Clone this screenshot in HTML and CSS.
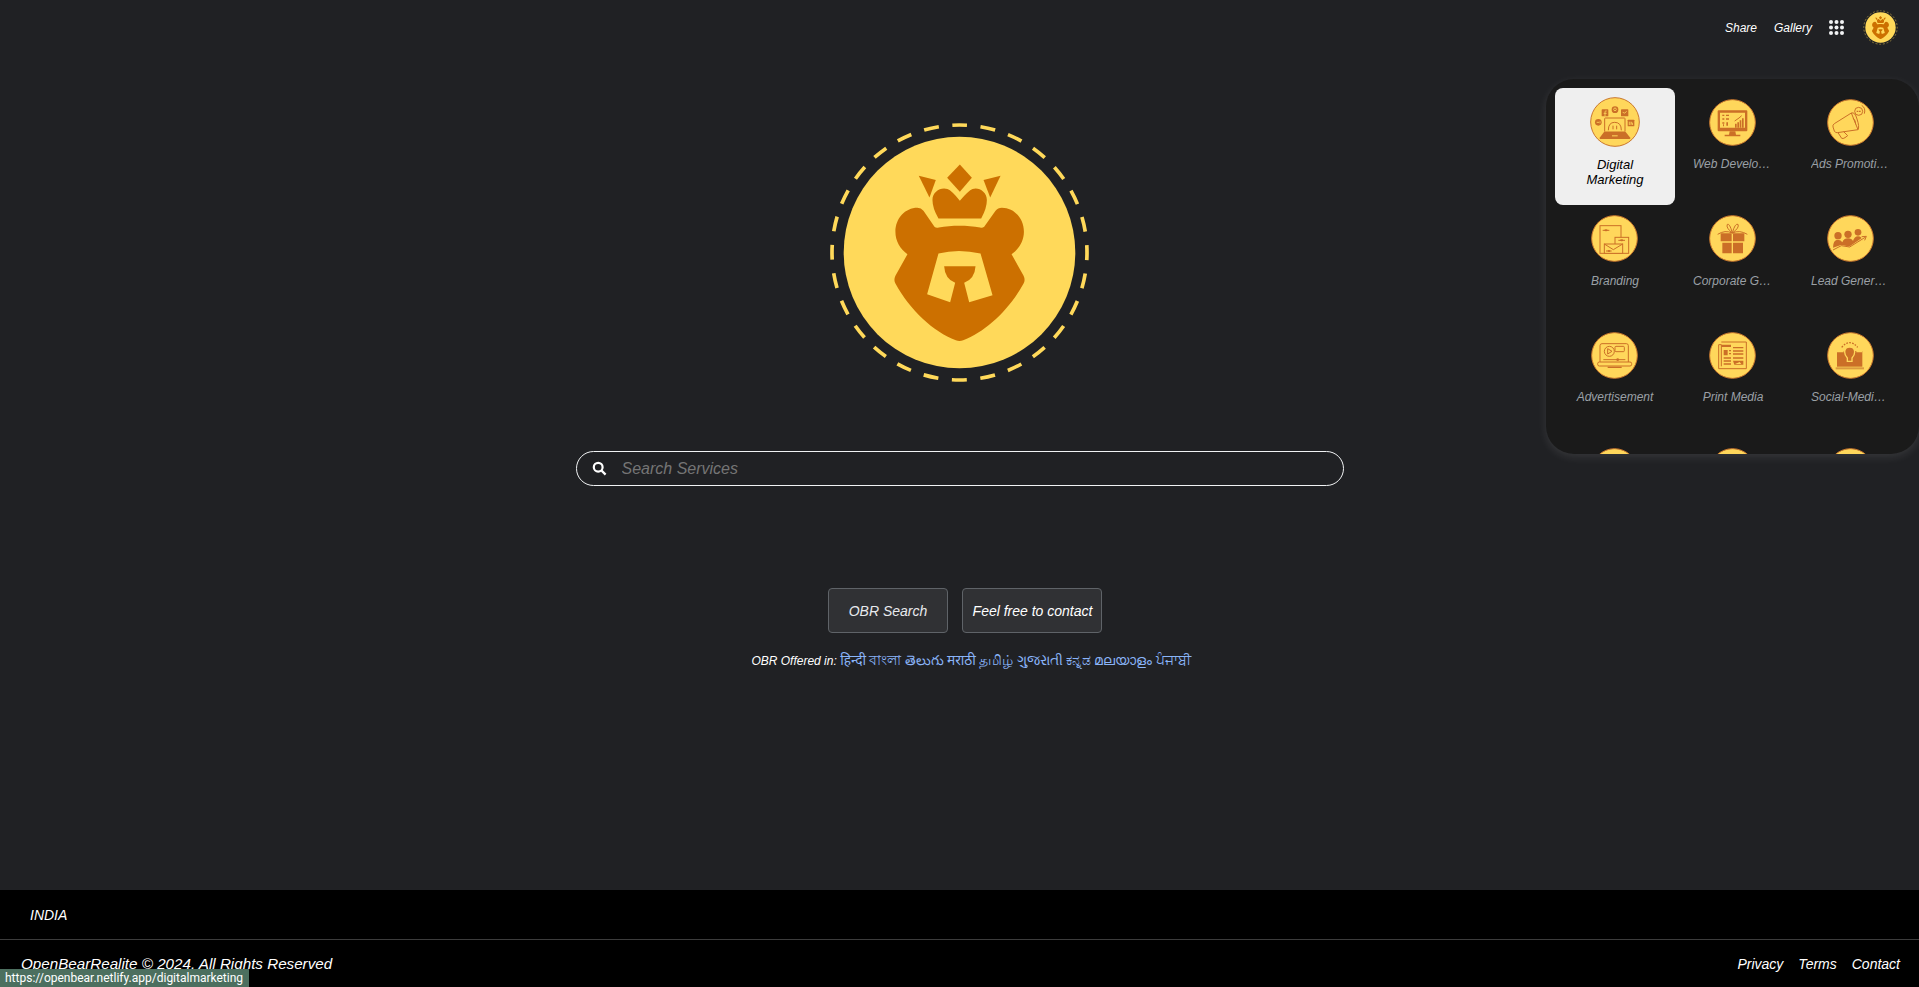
FILE: index.html
```html
<!DOCTYPE html>
<html lang="en">
<head>
<meta charset="utf-8">
<title>OpenBearRealite</title>
<link rel="stylesheet" href="styles.css">
</head>
<body>
<svg class="defs" width="0" height="0" aria-hidden="true">
  <symbol id="bear" viewBox="48 27 800 800">
    <circle class="ring" cx="448" cy="427" r="382"/>
    <circle class="disc" cx="448" cy="427" r="347"/>
    <path class="bear" d="M322 293C285 293 256 325 256 365C256 393 270 417 292 432L256 497Q250 510 256 520C300 600 370 665 437 690Q448 694 459 690C526 665 596 600 640 520Q646 510 640 497L604 432C626 417 641 393 641 365C641 325 612 293 575 293Q563 293 556 302L522 350Q516 354 510 352C470 345 425 345 386 352Q378 354 373 350L340 302Q333 293 322 293Z"/>
    <path class="disc" d="M385 430Q445 415 511 430L547 555L477 576L462 518Q494 505 496 468L402 468Q404 505 435 518L420 576L351 552Z"/>
    <path class="bear" d="M385 325L513 325Q530 295 530 270C530 245 505 230 487 237Q475 242 449 272Q425 242 412 237C392 230 367 245 367 270Q367 295 385 325Z"/>
    <path class="bear" d="M449 163L485 203L449 245L411 203Z"/>
    <path class="bear" d="M326 197L377 210L358 262Z"/>
    <path class="bear" d="M571 197L520 210L540 262Z"/>
  </symbol>
  <symbol id="i-digital" viewBox="0 0 150 150">
    <circle class="coin" cx="75" cy="75" r="73"/>
    <rect class="fo" x="35" y="37" width="20" height="21" rx="2"/>
    <path class="ly-thin" d="M50 42H47Q45 42 45 45V58M41 49H50"/>
    <circle class="fo" cx="75" cy="38" r="10"/>
    <circle class="ly-thin" cx="75" cy="37" r="4"/>
    <rect class="fo" x="93" y="37" width="22" height="21" rx="2"/>
    <path class="ly-thin" d="M98 46Q104 52 110 43"/>
    <circle class="fo" cx="25" cy="76" r="10"/>
    <path class="ly-thin" d="M20 76H27M30 73V79"/>
    <rect class="fo" x="113" y="68" width="20" height="20" rx="2"/>
    <path class="ly-thin" d="M118 74V84M123 84V74M123 78Q128 74 128 84"/>
    <rect class="ln" x="44" y="63" width="61" height="42" rx="2"/>
    <path class="ln" d="M55 100Q55 76 74 76Q94 76 94 100M69 97V86M80 97V86"/>
    <path class="fo" d="M42 105H107L121 122Q122 126 118 126H31Q28 126 29 122Z"/>
    <rect class="fy" x="66" y="115" width="17" height="3"/>
  </symbol>
  <symbol id="i-web" viewBox="0 0 141 141">
    <circle class="coin" cx="70.5" cy="70.5" r="68.5"/>
    <path class="fo" d="M26 37Q26 34 29 34H112Q115 34 115 37V94Q115 97 112 97H29Q26 97 26 94ZM33 41V86H108V41Z" fill-rule="evenodd"/>
    <path class="fo" d="M62 97H79L81 107H60ZM47 107H94V112H47Z"/>
    <path class="fo" d="M40 47H46V51H40ZM51 47H60V51H51ZM40 58H46V62H40ZM51 58H60V62H51ZM40 70H46V74H40ZM52 70H57V80H52ZM42 76H45V82H42Z"/>
    <path class="ln" d="M77 66L90 57L98 50"/>
    <path class="fo" d="M78 74H83V86H78ZM85 70H90V86H85ZM92 64H97V86H92ZM99 58H104V86H99Z"/>
  </symbol>
  <symbol id="i-ads" viewBox="0 0 141 141">
    <circle class="coin" cx="70.5" cy="70.5" r="68.5"/>
    <path class="ln" d="M73 42L22 74Q16 78 18 84L22 96Q25 102 31 101L93 92Z"/>
    <path class="ln" d="M73 42Q84 38 90 60Q98 84 93 92M78 57Q86 64 86 76"/>
    <path class="ln" d="M33 101L44 118Q48 120 54 116L62 110L50 98"/>
    <circle class="ln" cx="95" cy="37" r="12"/>
    <path class="ln" d="M104 19Q117 27 112 44"/>
    <path class="fo" d="M89 35H94V39H89ZM96 35H101V39H96Z"/>
  </symbol>
  <symbol id="i-brand" viewBox="0 0 141 141">
    <circle class="coin" cx="70.5" cy="70.5" r="68.5"/>
    <rect class="ln" x="27" y="32" width="63" height="83"/>
    <rect class="lf" x="72" y="67" width="41" height="48"/>
    <rect class="lf" x="40" y="87" width="55" height="28"/>
    <path class="ln" d="M40 87L67 104L95 87M35 46H55M82 76H102M45 108H62"/>
    <ellipse class="fo" cx="45" cy="46" rx="5" ry="3"/>
    <ellipse class="fo" cx="92" cy="76" rx="5" ry="3"/>
    <ellipse class="fo" cx="54" cy="108" rx="4" ry="3"/>
  </symbol>
  <symbol id="i-gift" viewBox="0 0 141 141">
    <circle class="coin" cx="70.5" cy="70.5" r="68.5"/>
    <path class="ln" d="M26 58Q48 44 70 54Q92 44 115 58M70 54Q50 38 55 28Q62 24 70 54Q78 24 87 28Q92 38 70 54"/>
    <path class="fo" d="M35 55H68V79H35ZM72 55H106V79H72ZM40 83H68V115H40ZM72 83H102V115H72Z"/>
  </symbol>
  <symbol id="i-lead" viewBox="0 0 141 141">
    <circle class="coin" cx="70.5" cy="70.5" r="68.5"/>
    <circle class="fo" cx="33" cy="62" r="11"/>
    <circle class="fo" cx="63" cy="58" r="11"/>
    <circle class="fo" cx="93" cy="52" r="10"/>
    <path class="fo" d="M18 98Q18 74 33 74Q42 74 46 82Q50 70 63 70Q74 70 78 78Q82 64 93 64Q104 64 106 76L66 96L42 90Z"/>
    <path class="ly" d="M18 108L43 94L68 98L112 68"/>
    <path class="ln" d="M18 105L43 92L68 96L116 66M104 65L118 64L113 76"/>
  </symbol>
  <symbol id="i-advert" viewBox="0 0 141 141">
    <circle class="coin" cx="70.5" cy="70.5" r="68.5"/>
    <path class="ln" d="M27 90V41Q27 35 33 35H106Q112 35 112 41V90"/>
    <rect class="ln" x="20" y="90" width="102" height="12" rx="5"/>
    <circle class="ln" cx="55" cy="58" r="15"/>
    <path class="ln" d="M50 50L63 58L50 66Z"/>
    <rect class="ln" x="72" y="43" width="28" height="16" rx="3"/>
    <path class="ln" d="M37 83H103"/>
    <circle class="fo" cx="80" cy="83" r="4"/>
    <rect class="fo" x="50" y="104" width="42" height="4"/>
  </symbol>
  <symbol id="i-print" viewBox="0 0 141 141">
    <circle class="coin" cx="70.5" cy="70.5" r="68.5"/>
    <path class="ln" d="M37 30H112V110H29V38H37V103"/>
    <path class="fo" d="M37 38H66V45H37ZM72 45H103V49H72ZM44 54H56V70H44ZM60 54H66V58H60ZM60 63H66V67H60ZM72 55H103V59H72ZM72 64H103V68H72ZM44 76H66V80H44ZM44 85H66V89H44ZM44 94H66V98H44ZM72 76H103V80H72ZM72 86L103 86V98H76Z"/>
    <path class="fy" d="M78 96L92 90L97 96Z"/>
  </symbol>
  <symbol id="i-social" viewBox="0 0 141 141">
    <circle class="coin" cx="70.5" cy="70.5" r="68.5"/>
    <rect class="fo" x="30" y="57" width="76" height="47"/>
    <rect class="fl" x="26" y="106" width="85" height="6"/>
    <path class="ly" d="M30 57H50M88 57H106"/>
    <path class="bulb" d="M61 88V78Q53 70 53 60Q53 45 68 45Q83 45 83 60Q83 70 75 78V88Z"/>
    <path class="dash" d="M44 46Q68 18 92 46"/>
  </symbol>
</svg>

<div class="page">
  <header class="topbar">
    <a class="toplink" href="#">Share</a>
    <a class="toplink" href="#">Gallery</a>
    <svg class="apps" width="15" height="15" viewBox="0 0 15 15" aria-label="Apps">
      <circle cx="2" cy="2" r="2"/><circle cx="7.5" cy="2" r="2"/><circle cx="13" cy="2" r="2"/>
      <circle cx="2" cy="7.5" r="2"/><circle cx="7.5" cy="7.5" r="2"/><circle cx="13" cy="7.5" r="2"/>
      <circle cx="2" cy="13" r="2"/><circle cx="7.5" cy="13" r="2"/><circle cx="13" cy="13" r="2"/>
    </svg>
    <svg class="avatar" aria-label="Account"><use href="#bear"/></svg>
  </header>

  <main class="main">
    <svg class="logo" role="img" aria-label="OpenBearRealite"><use href="#bear"/></svg>
    <form class="search">
      <svg class="search-icon" width="15" height="15" viewBox="0 0 15 15" aria-hidden="true">
        <circle cx="6.2" cy="6.2" r="4.4"/><path d="M9.6 9.6L13.6 13.6"/>
      </svg>
      <input class="search-input" type="text" placeholder="Search Services">
    </form>
    <div class="actions">
      <button class="btn btn-search" type="button">OBR Search</button>
      <button class="btn btn-contact" type="button">Feel free to contact</button>
    </div>
    <p class="offered">OBR Offered in:
      <a href="#">हिन्दी</a> <a href="#">বাংলা</a> <a href="#">తెలుగు</a> <a href="#">मराठी</a> <a href="#">தமிழ்</a> <a href="#">ગુજરાતી</a> <a href="#">ಕನ್ನಡ</a> <a href="#">മലയാളം</a> <a href="#">ਪੰਜਾਬੀ</a>
    </p>
  </main>

  <footer class="footer">
    <div class="country">INDIA</div>
    <div class="legal">
      <span class="copy">OpenBearRealite © 2024. All Rights Reserved</span>
      <nav class="legal-links">
        <a href="#">Privacy</a>
        <a href="#">Terms</a>
        <a href="#">Contact</a>
      </nav>
    </div>
  </footer>
</div>

<aside class="panel">
  <div class="panel-grid">
    <a class="tile tile-active" href="#"><span class="tile-icon"><svg class="coin-big"><use href="#i-digital"/></svg></span><span class="tile-label">Digital Marketing</span></a>
    <a class="tile" href="#"><span class="tile-icon"><svg class="coin-svg"><use href="#i-web"/></svg></span><span class="tile-label">Web Development</span></a>
    <a class="tile" href="#"><span class="tile-icon"><svg class="coin-svg"><use href="#i-ads"/></svg></span><span class="tile-label">Ads Promotions</span></a>
    <a class="tile" href="#"><span class="tile-icon"><svg class="coin-svg"><use href="#i-brand"/></svg></span><span class="tile-label">Branding</span></a>
    <a class="tile" href="#"><span class="tile-icon"><svg class="coin-svg"><use href="#i-gift"/></svg></span><span class="tile-label">Corporate Gifts</span></a>
    <a class="tile" href="#"><span class="tile-icon"><svg class="coin-svg"><use href="#i-lead"/></svg></span><span class="tile-label">Lead Generation</span></a>
    <a class="tile" href="#"><span class="tile-icon"><svg class="coin-svg"><use href="#i-advert"/></svg></span><span class="tile-label">Advertisement</span></a>
    <a class="tile" href="#"><span class="tile-icon"><svg class="coin-svg"><use href="#i-print"/></svg></span><span class="tile-label">Print Media</span></a>
    <a class="tile" href="#"><span class="tile-icon"><svg class="coin-svg"><use href="#i-social"/></svg></span><span class="tile-label">Social-Media Marketing</span></a>
    <a class="tile" href="#"><span class="tile-icon"><svg class="coin-svg"><use href="#i-web"/></svg></span></a>
    <a class="tile" href="#"><span class="tile-icon"><svg class="coin-svg"><use href="#i-ads"/></svg></span></a>
    <a class="tile" href="#"><span class="tile-icon"><svg class="coin-svg"><use href="#i-brand"/></svg></span></a>
  </div>
</aside>

<div class="status">https://openbear.netlify.app/digitalmarketing</div>
</body>
</html>
```

FILE: styles.css
```css
* { box-sizing: border-box; }
html, body { margin: 0; height: 100%; }
body {
  background: #202124;
  color: #fff;
  font-family: "Liberation Sans", Arial, sans-serif;
  font-style: italic;
  overflow: hidden;
}
a { color: inherit; text-decoration: none; }
.defs { position: absolute; }

.page { display: flex; flex-direction: column; height: 987px; }

.topbar {
  display: flex;
  align-items: center;
  justify-content: flex-end;
  gap: 17px;
  height: 54px;
  padding-right: 21px;
}
.toplink { margin-top: 2px; font-size: 12px; }
.apps { fill: #f1f3f4; }
.avatar { width: 35px; height: 35px; margin-left: 2px; }

.ring { fill: none; stroke: #ffd95a; stroke-width: 11; stroke-dasharray: 45 40.72; stroke-dashoffset: 22.5; transform: rotate(-90deg); transform-origin: 448px 427px; }
.disc { fill: #ffd95a; }
.bear { fill: #cc7000; }

.main { display: flex; flex-direction: column; align-items: center; flex: 1; }
.logo { width: 267px; height: 267px; margin-top: 65px; flex: none; }
.search {
  display: flex;
  align-items: center;
  width: 768px;
  height: 35px;
  margin-top: 65px;
  padding-left: 15px;
  border: 1px solid #f1f3f4;
  border-radius: 18px;
}
.search-icon { fill: none; stroke: #fff; stroke-width: 2.2; flex: none; }
.search-input {
  flex: 1;
  margin-left: 15px;
  padding: 0;
  border: 0;
  outline: 0;
  background: transparent;
  color: #fff;
  font: italic 16px "Liberation Sans", Arial, sans-serif;
}
.search-input::placeholder { color: #757575; opacity: 1; }

.actions { display: flex; gap: 14px; margin-top: 102px; padding-left: 11px; }
.btn {
  height: 45px;
  padding: 0;
  border: 1px solid #5f6368;
  border-radius: 4px;
  background: #303134;
  color: #e8eaed;
  font: italic 14px "Liberation Sans", Arial, sans-serif;
}
.btn-search { width: 120px; }
.btn-contact { width: 140px; padding-left: 1px; color: #fff; }

.offered {
  margin: 20px 0 0;
  padding-left: 23px;
  font-size: 12px;
  line-height: 16px;
  white-space: nowrap;
  font-family: "Liberation Sans", "Noto Sans", "DejaVu Sans", sans-serif;
}
.offered a { color: #8ab4f8; font-size: 13.7px; font-style: normal; }

.footer { background: #000; height: 97px; flex: none; }
.country {
  display: flex;
  align-items: center;
  height: 50px;
  padding-left: 30px;
  border-bottom: 1px solid #3c3c3c;
  font-size: 14px;
}
.legal {
  display: flex;
  align-items: center;
  justify-content: space-between;
  height: 47px;
  padding: 0 19px 0 21px;
}
.copy { font-size: 15.2px; }
.legal-links { display: flex; gap: 15px; font-size: 14px; }

.panel {
  position: absolute;
  top: 79px;
  right: 0;
  width: 373px;
  height: 375px;
  overflow: hidden;
  background: #1a1a1a;
  border-radius: 28px;
  box-shadow: 0 3px 10px rgba(255, 255, 255, 0.1);
}
.panel-grid {
  display: grid;
  grid-template-columns: repeat(3, 118px);
  padding: 9px 0 0 10px;
}
.tile {
  display: flex;
  flex-direction: column;
  align-items: center;
  width: 120px;
  height: 117px;
  margin: 0 -1px -0.5px;
  padding-top: 9px;
  border-radius: 8px;
  color: #9aa0a6;
  font-size: 12px;
  line-height: 15px;
}
.tile-active { background: #efefef; color: #000; font-size: 13px; }
.tile-icon { display: flex; align-items: center; width: 50px; height: 50px; padding-left: 1px; flex: none; }
.coin-svg { width: 47px; height: 47px; }
.coin-big { width: 50px; height: 50px; margin-left: -1px; }
.tile-label {
  width: 80px;
  margin-top: 10px;
  overflow: hidden;
  text-align: center;
  text-overflow: ellipsis;
  white-space: nowrap;
}
.tile-active .tile-label { white-space: normal; }

.coin { fill: #ffd75b; stroke: #c9772e; stroke-width: 3; }
.fo { fill: #cb6f27; }
.fy { fill: #ffd75b; }
.fl { fill: #dc9a3e; }
.ln { fill: none; stroke: #cb6f27; stroke-width: 3; }
.lf { fill: #ffd75b; stroke: #cb6f27; stroke-width: 3; }
.ly { fill: none; stroke: #ffd75b; stroke-width: 7; }
.ly-thin { fill: none; stroke: #ffd75b; stroke-width: 2.5; }
.bulb { fill: #cb6f27; stroke: #ffd75b; stroke-width: 4; }
.dash { fill: none; stroke: #cb6f27; stroke-width: 4; stroke-dasharray: 5 4; }

.status {
  position: fixed;
  left: 0;
  bottom: 0;
  height: 18px;
  padding: 0 6px 0 5px;
  background: #4c6f5f;
  color: #fff;
  font: normal 12px/18px Roboto, "Noto Sans", sans-serif;
}
```
